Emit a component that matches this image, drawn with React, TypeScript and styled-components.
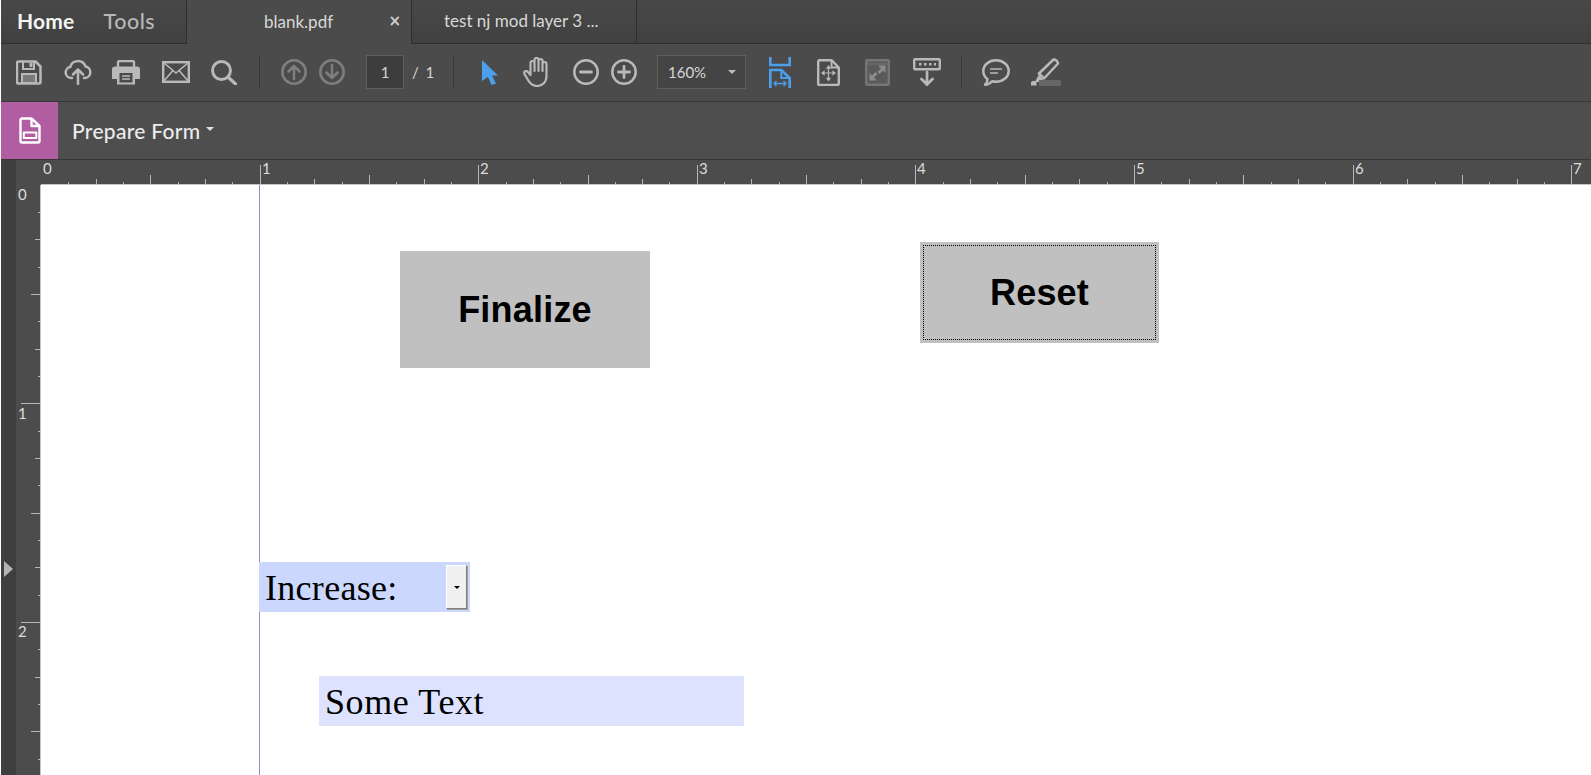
import React from "react";
import styled, { createGlobalStyle } from "styled-components";

const Global = createGlobalStyle`
  html, body { margin: 0; padding: 0; height: 100%; background: #fff; overflow: hidden; }
  #root { height: 775px; }
  * { box-sizing: border-box; }
`;

const Root = styled.div`
  width: 1591px; height: 775px; padding-left: 1px; background: #fff;
  display: flex; flex-direction: column; overflow: hidden;
  font-family: Lato, "Open Sans", sans-serif;
`;
const TabBar = styled.div`
  height: 44px; flex: none; display: flex;
  background: linear-gradient(#484848, #414141);
  border-bottom: 1px solid #2e2e2e; color: #e4e4e4;
`;
const NavTabs = styled.div`
  width: 186px; display: flex; align-items: center; padding-left: 16px;
  border-right: 1px solid #2e2e2e; padding-bottom: 2px;
`;
const NavTab = styled.span<{ $active?: boolean }>`
  font-size: ${(p) => (p.$active ? "21px" : "21.5px")};
  letter-spacing: ${(p) => (p.$active ? ".2px" : ".5px")};
  font-weight: ${(p) => (p.$active ? 700 : 500)};
  color: ${(p) => (p.$active ? "#f4f4f4" : "#b8b8b8")};
  margin-left: ${(p) => (p.$active ? 0 : "29px")};
`;
const DocTab = styled.div<{ $active?: boolean }>`
  width: 225px;
  height: ${(p) => (p.$active ? "44px" : "43px")};
  position: relative; display: flex; align-items: center;
  padding-left: ${(p) => (p.$active ? "77px" : "32px")}; padding-bottom: 2px;
  font-size: 17px; color: #d8d8d8;
  background: ${(p) => (p.$active ? "#4b4b4b" : "transparent")};
  border-right: 1px solid #2e2e2e;
`;
const CloseMark = styled.span`
  position: absolute; right: 10px; top: 11px; font-size: 15px; line-height: 20px; font-weight: 700;
  color: #d0d0d0; font-family: "DejaVu Sans", sans-serif;
`;

const Toolbar = styled.div`
  height: 58px; flex: none; display: flex; align-items: center;
  background: #4b4b4b; border-bottom: 1px solid #383838; padding-left: 15px; padding-bottom: 1px;
`;
const ToolIcon = styled.svg<{ $gap?: number; $tone?: "dim" | "blue" | "fade" }>`
  flex: none; display: block;
  margin-left: ${(p) => p.$gap ?? 0}px;
  color: ${(p) => (p.$tone === "dim" ? "#7e7e7e" : p.$tone === "blue" ? "#4d9fec" : p.$tone === "fade" ? "#757575" : "#b9b9b9")};
`;
const Separator = styled.div<{ $gap: number }>`
  width: 1px; height: 34px; background: #383838; flex: none; margin-left: ${(p) => p.$gap}px;
`;
const PageBox = styled.div`
  width: 38px; height: 34px; margin-left: 21px; flex: none;
  background: #3d3d3d; border: 1px solid #5e5e5e; color: #d6d6d6;
  font-size: 15px; display: flex; align-items: center; justify-content: center;
`;
const PageCount = styled.span`
  margin-left: 8px; width: 41px; flex: none; font-size: 15px; color: #d6d6d6; word-spacing: 3px;
`;
const ZoomBox = styled.div`
  width: 89px; height: 34px; margin-left: 20px; flex: none; position: relative;
  background: #444; border: 1px solid #5e5e5e; color: #d6d6d6;
  font-size: 15px; display: flex; align-items: center; padding-left: 10px;
`;
const Caret = styled.span<{ $size?: number; $color?: string }>`
  display: inline-block; width: 0; height: 0; flex: none;
  border-left: ${(p) => p.$size ?? 4}px solid transparent;
  border-right: ${(p) => p.$size ?? 4}px solid transparent;
  border-top: ${(p) => p.$size ?? 4}px solid ${(p) => p.$color ?? "#bbb"};
`;
const ZoomCaret = styled(Caret)`
  position: absolute; right: 9px; top: 14px;
`;

const FormBar = styled.div`
  height: 58px; flex: none; display: flex; align-items: center;
  background: #4e4e4e; border-bottom: 1px solid #363636;
`;
const FormBadge = styled.div`
  width: 57px; height: 57px; flex: none; background: #b05da1;
  display: flex; align-items: center; justify-content: center;
`;
const FormTitle = styled.span`
  margin-left: 14px; font-size: 21px; font-weight: 500; color: #ececec; letter-spacing: .3px;
`;
const FormCaret = styled(Caret)`
  margin: 0 0 4px 5px;
`;

const Workspace = styled.div`
  flex: 1; min-height: 0; display: grid;
  grid-template-columns: 15px 25px 1fr; grid-template-rows: 25px 1fr;
`;
const Strip = styled.div`
  grid-row: 1 / 3; background: #3f3f3f; display: flex; align-items: flex-start; padding: 0 0 0 3px;
`;
const StripHandle = styled.span`
  margin-top: 401px; width: 0; height: 0;
  border-top: 8px solid transparent; border-bottom: 8px solid transparent;
  border-left: 9px solid #b4b4b4;
`;
const Corner = styled.div`
  background: #4c4c4c;
`;
const RulerTop = styled.div`
  background: #4c4c4c; border-bottom: 1px solid #c4c4c4; position: relative;
`;
const RulerSide = styled.div`
  background: #4c4c4c; border-right: 1px solid #c4c4c4; position: relative; overflow: hidden;
`;
const RulerArt = styled.svg`
  position: absolute; left: 0; top: 0; display: block;
  text { font-family: Lato, "Open Sans", sans-serif; font-size: 15px; fill: #dcdcdc; }
`;
const Page = styled.div`
  position: relative; background: #fff; overflow: hidden;
`;
const GuideLine = styled.div`
  position: absolute; left: 218px; top: 0; bottom: 0; width: 1px; background: #8e8ec8;
`;
const PdfButton = styled.div`
  position: absolute; background: #c0c0c0; color: #000;
  display: flex; align-items: center; justify-content: center;
  font-family: "Liberation Sans", Arial, sans-serif; font-weight: 700; font-size: 36px;
  letter-spacing: .2px;
`;
const FinalizeButton = styled(PdfButton)`
  left: 359px; top: 66px; width: 250px; height: 117px;
`;
const ResetButton = styled(PdfButton)`
  left: 879px; top: 57px; width: 239px; height: 101px;
  &::after {
    content: ""; position: absolute; inset: 3px; border: 1px dotted #000;
  }
`;
const PdfField = styled.div`
  position: absolute; height: 50px; color: #000; display: flex; align-items: center;
  font-family: "Liberation Serif", "Times New Roman", serif; font-size: 36px;
  padding: 2px 0 0 6px;
`;
const ComboField = styled(PdfField)`
  left: 218px; top: 377px; width: 211px; background: #ccd7fd; letter-spacing: .3px;
`;
const TextField = styled(PdfField)`
  left: 278px; top: 491px; width: 425px; background: #dde3fe; letter-spacing: .6px;
`;
const ComboButton = styled.div`
  position: absolute; right: 3px; top: 3px; width: 21px; height: 44px;
  background: #f0f0f0; display: flex; align-items: center; justify-content: center;
  border: 1px solid; border-color: #fff #7f7f7f #7f7f7f #fff;
  box-shadow: 1px 1px 0 #a0a0a0;
`;

const O = 0, I = 218.6;

function TopRuler() {
  const ticks: React.ReactNode[] = [];
  for (let k = 1; k <= 57; k++) {
    const x = Math.round(O + (k * I) / 8) + 0.5;
    const len = k % 8 === 0 ? 19 : k % 4 === 0 ? 9 : k % 2 === 0 ? 5 : 2;
    ticks.push(<line key={k} x1={x} x2={x} y1={24 - len} y2={24} stroke="#b8b8b8" />);
  }
  const labels = [0, 1, 2, 3, 4, 5, 6, 7].map((n) => (
    <text key={n} x={Math.round(O + n * I) + 2} y={14}>{n}</text>
  ));
  return (
    <RulerTop>
      <RulerArt width="1550" height="25">{ticks}{labels}</RulerArt>
    </RulerTop>
  );
}

function SideRuler() {
  const ticks: React.ReactNode[] = [];
  for (let k = 1; k <= 22; k++) {
    const y = Math.round(-0.2 + (k * I) / 8) + 0.5;
    const len = k % 8 === 0 ? 19 : k % 4 === 0 ? 9 : k % 2 === 0 ? 5 : 2;
    ticks.push(<line key={k} x1={24 - len} x2={24} y1={y} y2={y} stroke="#b8b8b8" />);
  }
  const labels = [0, 1, 2].map((n) => (
    <text key={n} x={2} y={Math.round(n * I) + 15}>{n}</text>
  ));
  return (
    <RulerSide>
      <RulerArt width="25" height="600">{ticks}{labels}</RulerArt>
    </RulerSide>
  );
}

export default function App() {
  return (
    <Root>
      <Global />
      <TabBar>
        <NavTabs>
          <NavTab $active>Home</NavTab>
          <NavTab>Tools</NavTab>
        </NavTabs>
        <DocTab $active>blank.pdf<CloseMark>×</CloseMark></DocTab>
        <DocTab>test nj mod layer 3 ...</DocTab>
      </TabBar>

      <Toolbar>
        {/* save */}
        <ToolIcon width="26" height="25" viewBox="0 0 26 25" fill="none" stroke="currentColor" strokeWidth="2.5">
          <path d="M2.500 1.500h17l5 5v15.500a1.500 1.500 0 0 1-1.500 1.500H2.500A1.500 1.500 0 0 1 1 22V3a1.500 1.500 0 0 1 1.500-1.500z" strokeLinejoin="round" />
          <path d="M7 2v7h11V2" strokeWidth="2" />
          <rect x="13.500" y="3" width="3" height="4" fill="currentColor" stroke="none" />
          <rect x="6" y="14" width="14" height="9" fill="#7a7a7a" stroke="currentColor" strokeWidth="2" />
        </ToolIcon>
        {/* cloud upload */}
        <ToolIcon $gap={22} width="28" height="26" viewBox="0 0 28 26" fill="none" stroke="currentColor" strokeWidth="2.500" strokeLinecap="round" strokeLinejoin="round">
          <path d="M8 19H7a5.500 5.500 0 0 1-.800-10.900A8 8 0 0 1 21.500 7.500 5.800 5.800 0 0 1 21 19h-1" />
          <path d="M14 25V11M9 15.500 14 10.500l5 5" />
        </ToolIcon>
        {/* print */}
        <ToolIcon $gap={20} width="28" height="25" viewBox="0 0 28 25" fill="none">
          <path d="M6 8V2.500A1.500 1.500 0 0 1 7.500 1h13A1.500 1.500 0 0 1 22 2.500V8" stroke="currentColor" strokeWidth="2.400" />
          <path d="M3 6.500h22a3 3 0 0 1 3 3V19h-5v5.500H5V19H0V9.500a3 3 0 0 1 3-3z" fill="currentColor" />
          <rect x="7.500" y="13" width="13" height="9.500" fill="#4b4b4b" />
          <path d="M10 16h8M10 19h8" stroke="currentColor" strokeWidth="1.500" />
        </ToolIcon>
        {/* mail */}
        <ToolIcon $gap={22} width="28" height="22" viewBox="0 0 28 22" fill="none" stroke="currentColor" strokeWidth="2.400">
          <rect x="1.200" y="1.200" width="25.600" height="19.600" />
          <path d="M1.500 1.500 14 12 26.500 1.500M1.500 20.500l9-10.500M26.500 20.500l-9-10.500" strokeWidth="1.600" />
        </ToolIcon>
        {/* search */}
        <ToolIcon $gap={21} width="26" height="25" viewBox="0 0 26 25" fill="none" stroke="currentColor" strokeWidth="2.900" strokeLinecap="round">
          <circle cx="10.500" cy="10.500" r="9" />
          <path d="M17 17 24.500 24" strokeWidth="3.200" />
        </ToolIcon>
        <Separator $gap={22} />
        {/* up */}
        <ToolIcon $gap={21} $tone="dim" width="26" height="26" viewBox="0 0 26 26" fill="none" stroke="currentColor" strokeWidth="2.600" strokeLinecap="round" strokeLinejoin="round">
          <circle cx="13" cy="13" r="11.700" />
          <path d="M13 20V7M7.500 12.500 13 7l5.500 5.500" />
        </ToolIcon>
        {/* down */}
        <ToolIcon $gap={12} $tone="dim" width="26" height="26" viewBox="0 0 26 26" fill="none" stroke="currentColor" strokeWidth="2.600" strokeLinecap="round" strokeLinejoin="round">
          <circle cx="13" cy="13" r="11.700" />
          <path d="M13 6v13M7.500 13.500 13 19l5.500-5.500" />
        </ToolIcon>
        <PageBox>1</PageBox>
        <PageCount>/ 1</PageCount>
        <Separator $gap={0} />
        {/* cursor */}
        <ToolIcon $gap={28} $tone="blue" width="16" height="25" viewBox="0 0 16 25">
          <path d="M0 0 16 15.500H10L14 23.500 9.500 25 6 17 0 21z" fill="currentColor" />
        </ToolIcon>
        {/* hand */}
        <ToolIcon $gap={25} width="28" height="30" viewBox="0 0 28 30" fill="none" stroke="currentColor" strokeWidth="2.200" strokeLinecap="round" strokeLinejoin="round">
          <path d="M7.500 17V6a2 2 0 0 1 4 0v8M11.500 13V3a2 2 0 0 1 4 0v11M15.500 13V4a2 2 0 0 1 4 0v10M19.500 14V7a2 2 0 0 1 4 0v12c0 6-4 10-9.500 10-4.500 0-7-2.500-9-6l-3.500-6c-1.200-2.500 2-4 3.500-2l2.500 3" />
        </ToolIcon>
        {/* minus */}
        <ToolIcon $gap={22} width="26" height="26" viewBox="0 0 26 26" fill="none" stroke="currentColor" strokeWidth="2.500" strokeLinecap="round">
          <circle cx="13" cy="13" r="11.700" />
          <path d="M7.500 13h11" strokeWidth="2.800" />
        </ToolIcon>
        {/* plus */}
        <ToolIcon $gap={12} width="26" height="26" viewBox="0 0 26 26" fill="none" stroke="currentColor" strokeWidth="2.500" strokeLinecap="round">
          <circle cx="13" cy="13" r="11.700" />
          <path d="M7.500 13h11M13 7.500v11" strokeWidth="2.800" />
        </ToolIcon>
        <ZoomBox>160%<ZoomCaret $size={4} $color="#bdbdbd" /></ZoomBox>
        {/* fit width */}
        <ToolIcon $gap={23} $tone="blue" width="22" height="31" viewBox="0 0 22 31" fill="none" stroke="currentColor" strokeWidth="2.600">
          <path d="M1.300 0v8h19.400V0" />
          <path d="M1.300 31V13h11l8.400 8v10" />
          <path d="M12.300 13v8h8.400" strokeWidth="2" />
          <path d="M5 26.500h12M7.500 24 5 26.500 7.500 29M14.500 24 17 26.500 14.500 29" strokeWidth="1.400" />
        </ToolIcon>
        {/* fit page */}
        <ToolIcon $gap={26} width="23" height="27" viewBox="0 0 23 27" fill="none" stroke="currentColor" strokeWidth="2.400">
          <path d="M2.200 1.200h12.300L21.800 8.500v16a1.500 1.500 0 0 1-1.500 1.500H2.200A1 1 0 0 1 1.200 25V2.200z" strokeLinejoin="round" />
          <path d="M14.500 1.200v7.300h7.300" strokeWidth="2" />
          <path d="M11.500 8v12M5.500 14h12" strokeWidth="1.200" />
          <path d="M11.500 6 8.800 9.700h5.400zM11.500 22.500 8.800 18.800h5.400zM4 14l3.600-2.700v5.400zM19 14l-3.600-2.700v5.400z" fill="currentColor" stroke="none" />
        </ToolIcon>
        {/* fullscreen */}
        <ToolIcon $gap={25} $tone="fade" width="25" height="27" viewBox="0 0 25 27" fill="none">
          <rect x="1.200" y="1.200" width="22.600" height="24.600" rx="1" fill="#5a5a5a" stroke="currentColor" strokeWidth="2.400" />
          <path d="M1 5h23" stroke="currentColor" />
          <path d="M13 6.500h7.500V14L18 11.500l-3.500 3.500-2-2 3.500-3.500zM12 21.500H4.500V14l2.500 2.500 3.500-3.500 2 2-3.500 3.500z" fill="#8c8c8c" />
        </ToolIcon>
        {/* read mode */}
        <ToolIcon $gap={23} width="28" height="28" viewBox="0 0 28 28" fill="none" stroke="currentColor" strokeWidth="2.400">
          <rect x="1.200" y="1.200" width="25.600" height="10" rx="1" />
          <path d="M6 6.200h2.500M11 6.200h2.500M16 6.200h2.500M21 6.200h2" strokeWidth="2.600" />
          <path d="M14 14v13M8.500 21 14 26.500 19.500 21" strokeWidth="2.700" strokeLinecap="round" strokeLinejoin="round" />
        </ToolIcon>
        <Separator $gap={20} />
        {/* comment */}
        <ToolIcon $gap={20} width="28" height="27" viewBox="0 0 28 27" fill="none" stroke="currentColor" strokeWidth="2.500" strokeLinejoin="round">
          <path d="M14 1.300c7.400 0 12.700 4.800 12.700 10.700S21.400 22.700 14 22.700c-1.500 0-3-.2-4-.5C8 24.500 5.500 25.700 3 25.700c1.500-1.500 2.500-3.500 2.500-5.500C2.800 18.200 1.300 15.300 1.300 12 1.300 6.100 6.600 1.300 14 1.300z" />
          <path d="M8 10h12M8 14h8" strokeWidth="1.600" />
        </ToolIcon>
        {/* highlight */}
        <ToolIcon $gap={21} width="30" height="28" viewBox="0 0 30 28" fill="none">
          <path d="M22.500 1.500c1.500-.5 4.500 2 4.500 4L13 20.500 8 15.500z" stroke="currentColor" strokeWidth="2.500" strokeLinejoin="round" />
          <path d="M7.500 17 12 21.500 8 24H4z" fill="currentColor" />
          <path d="M0 27.500a3 3 0 0 1 5.500-3V27.500z" fill="currentColor" />
          <rect x="8" y="22" width="22" height="6" fill="#666" />
        </ToolIcon>
      </Toolbar>

      <FormBar>
        <FormBadge>
          <ToolIcon width="22" height="27" viewBox="0 0 22 27" fill="none" stroke="#fff" strokeWidth="2.400" strokeLinejoin="round">
            <path d="M2.500 1.500h10L20.500 9v15a1.500 1.500 0 0 1-1.500 1.500H3A1.500 1.500 0 0 1 1.500 24V2.500z" />
            <path d="M12.500 1.500V9h8" />
            <rect x="4.800" y="15.500" width="12.500" height="5.500" strokeWidth="2" />
          </ToolIcon>
        </FormBadge>
        <FormTitle>Prepare Form</FormTitle>
        <FormCaret $size={4} $color="#e0e0e0" />
      </FormBar>

      <Workspace>
        <Strip><StripHandle /></Strip>
        <Corner />
        <TopRuler />
        <SideRuler />
        <Page>
          <GuideLine />
          <FinalizeButton>Finalize</FinalizeButton>
          <ResetButton>Reset</ResetButton>
          <ComboField>
            Increase:
            <ComboButton><Caret $size={3} $color="#000" /></ComboButton>
          </ComboField>
          <TextField>Some Text</TextField>
        </Page>
      </Workspace>
    </Root>
  );
}
